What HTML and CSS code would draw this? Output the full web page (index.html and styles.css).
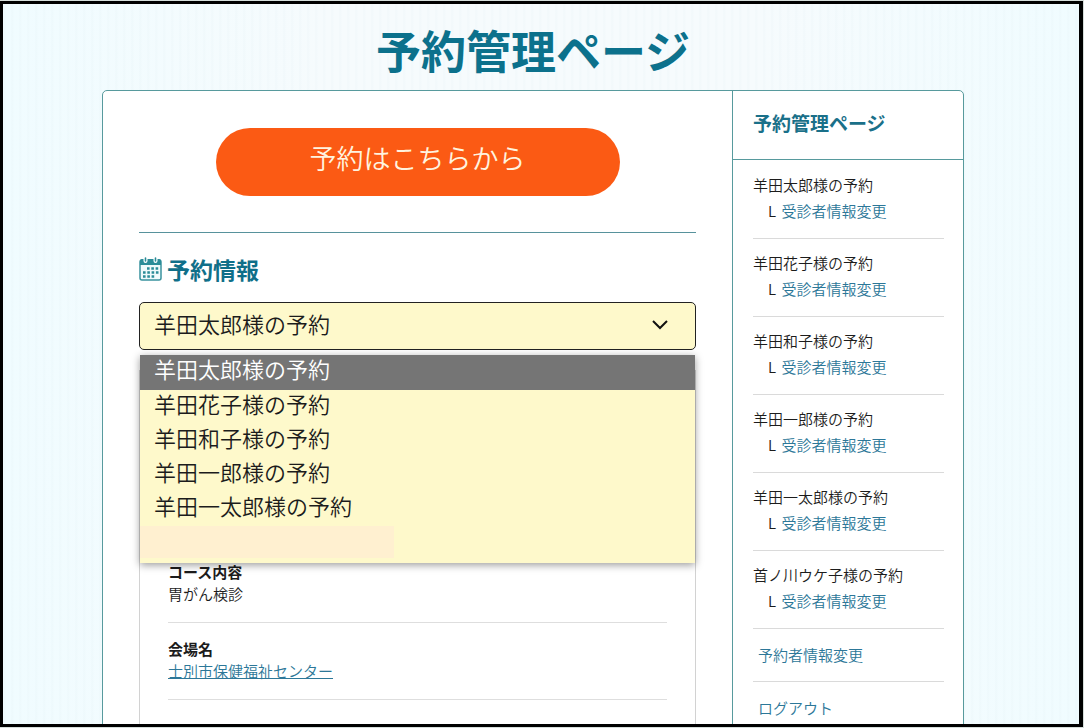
FILE: index.html
```
<!DOCTYPE html>
<html lang="ja">
<head>
    <meta charset="UTF-8">
    <meta name="viewport" content="width=device-width, initial-scale=1.0">
    <title>予約管理ページ</title>
    <link rel="stylesheet" href="styles.css">
</head>
<body>
    <div class="page">
        <h1 class="page-title">予約管理ページ</h1>
        <div class="card">
            <main class="main">
                <div class="reserve">
                    <button type="button" class="reserve-btn">予約はこちらから</button>
                </div>

                <h2 class="section-title">
                    <svg class="calendar" viewBox="0 0 24 24" aria-hidden="true">
                        <rect x="1" y="3" width="21" height="20" rx="2" fill="#f0fafb" stroke="#3a939e" stroke-width="1.5"/>
                        <path d="M1 8V4a2 2 0 0 1 2-2h17a2 2 0 0 1 2 2v4z" fill="#2b8c98"/>
                        <path d="M6.500 0v4M16.500 0v4" stroke="#fff" stroke-width="4" stroke-linecap="round"/>
                        <path d="M6.500 1v3M16.500 1v3" stroke="#2b8c98" stroke-width="1.600" stroke-linecap="round"/>
                        <path d="M8 11.500h12M4 15.500h16M4 19.500h12" stroke="#2b8c98" stroke-width="2.500" stroke-dasharray="2.600 1.700"/>
                    </svg>
                    <label for="person">予約情報</label>
                </h2>

                <div class="picker">
                    <select id="person" class="picker-select">
                        <option selected>羊田太郎様の予約</option>
                        <option>羊田花子様の予約</option>
                        <option>羊田和子様の予約</option>
                        <option>羊田一郎様の予約</option>
                        <option>羊田一太郎様の予約</option>
                    </select>
                    <svg class="chevron" viewBox="0 0 16 10" aria-hidden="true">
                        <path d="M1 1l7 7 7-7" fill="none" stroke="#111" stroke-width="2"/>
                    </svg>
                    <!-- Opened list -->
                    <ul class="menu" role="listbox" aria-labelledby="person">
                        <li class="menu-item selected" role="option" aria-selected="true">羊田太郎様の予約</li>
                        <li class="menu-item" role="option">羊田花子様の予約</li>
                        <li class="menu-item" role="option">羊田和子様の予約</li>
                        <li class="menu-item" role="option">羊田一郎様の予約</li>
                        <li class="menu-item" role="option">羊田一太郎様の予約</li>
                        <li class="menu-blank" role="presentation"></li>
                    </ul>
                </div>

                <dl class="details">
                    <div class="detail">
                        <dt>コース内容</dt>
                        <dd>胃がん検診</dd>
                    </div>
                    <div class="detail">
                        <dt>会場名</dt>
                        <dd><a href="#" class="place">士別市保健福祉センター</a></dd>
                    </div>
                    <div class="detail"></div>
                </dl>
            </main>

            <aside class="sidebar">
                <h2 class="sidebar-title">予約管理ページ</h2>
                <ul class="side-list">
                    <li>羊田太郎様の予約<div class="sub">L <a href="#">受診者情報変更</a></div></li>
                    <li>羊田花子様の予約<div class="sub">L <a href="#">受診者情報変更</a></div></li>
                    <li>羊田和子様の予約<div class="sub">L <a href="#">受診者情報変更</a></div></li>
                    <li>羊田一郎様の予約<div class="sub">L <a href="#">受診者情報変更</a></div></li>
                    <li>羊田一太郎様の予約<div class="sub">L <a href="#">受診者情報変更</a></div></li>
                    <li>首ノ川ウケ子様の予約<div class="sub">L <a href="#">受診者情報変更</a></div></li>
                    <li class="side-link"><a href="#">予約者情報変更</a></li>
                    <li class="side-link"><a href="#">ログアウト</a></li>
                </ul>
            </aside>
        </div>
    </div>
</body>
</html>
```
FILE: styles.css
```
* {
    box-sizing: border-box;
}

body {
    margin: 0;
    height: 100vh;
    padding: 1px 1px 1px 0;
    overflow: hidden;
    background-color: #d5ddda;
    color: #1c1c1c;
    font-family: "Noto Sans CJK JP", sans-serif;
    font-weight: 350;
    font-size: 15px;
    line-height: 22px;
}

h1, h2, ul, dl, dd {
    margin: 0;
    padding: 0;
}

ul {
    list-style: none;
}

a {
    color: #2c7798;
    text-decoration: none;
}

.page {
    height: 100%;
    overflow: hidden;
    padding: 0 16px 0 0;
    border: 3px solid #000;
    border-right-width: 4px;
    background:
        repeating-linear-gradient(90deg, rgba(220, 235, 240, 0.12) 0, rgba(220, 235, 240, 0.12) 2px, transparent 3px, transparent 8px),
        linear-gradient(90deg, #f0fcff, #f6fbfd 30%, #f6fbfd 70%, #f0fcff);
}

.page-title {
    padding: 16px 0 10px;
    text-align: center;
    font-size: 45px;
    line-height: 60px;
    color: #0c718c;
}

.card {
    display: grid;
    grid-template-columns: minmax(0, 1fr) 231px;
    max-width: 862px;
    margin: 0 auto;
    border: 1px solid #579a9d;
    border-radius: 5px;
    background-color: #fff;
}

.main {
    padding: 37px 36px 0;
}

.reserve {
    padding-bottom: 36px;
    border-bottom: 1px solid #57929c;
    text-align: center;
}

.reserve-btn {
    display: block;
    width: 404px;
    max-width: 100%;
    height: 68px;
    margin: 0 auto;
    padding: 0 0 10px;
    border: none;
    border-radius: 34px;
    background-color: #fb5a14;
    color: #fff3df;
    font-family: inherit;
    font-weight: 350;
    font-size: 27px;
    cursor: pointer;
}

.section-title {
    display: flex;
    align-items: center;
    gap: 4px;
    padding: 20px 0 17px;
    font-size: 23px;
    line-height: 32px;
    color: #0f6f89;
}

.calendar {
    width: 24px;
    height: 24px;
}

.picker {
    position: relative;
}

.picker-select {
    display: block;
    width: 100%;
    height: 48px;
    padding: 0 50px 6px 14px;
    border: 1px solid #222;
    border-radius: 5px;
    appearance: none;
    background-color: #fef9cb;
    color: #1c1c1c;
    font-family: inherit;
    font-weight: 350;
    font-size: 22px;
}

.chevron {
    position: absolute;
    top: 18px;
    right: 28px;
    width: 16px;
    height: 10px;
    pointer-events: none;
}

.menu {
    position: absolute;
    top: 53px;
    left: 1px;
    right: 1px;
    padding-bottom: 5px;
    background-color: #fef9cb;
    box-shadow: 0 2px 8px rgba(0, 0, 0, 0.4);
}

.menu-item {
    height: 34px;
    padding-left: 14px;
    font-size: 22px;
    line-height: 27px;
}

.menu-item.selected {
    height: 35px;
    background-color: #757575;
    color: #fff;
}

.menu-blank {
    width: 254px;
    height: 32px;
    background-color: #fff0d0;
}

.details {
    margin-top: 20px;
    padding: 175px 28px 0;
    border: 1px solid #d2d2d2;
}

.detail {
    min-height: 77px;
    padding: 15px 0 17px;
    border-bottom: 1px solid #dedede;
}

.detail dt {
    font-weight: bold;
}

.place {
    text-decoration: underline;
}

.sidebar {
    border-left: 1px solid #579a9d;
}

.sidebar-title {
    padding: 16px 20px 20px;
    border-bottom: 1px solid #579a9d;
    font-size: 19px;
    line-height: 32px;
    color: #1a7089;
}

.side-list {
    padding: 1px 19px 0 20px;
    line-height: 26px;
}

.side-list li {
    padding: 11px 0 14px;
    border-bottom: 1px solid #dadada;
}

.sub {
    padding-left: 15px;
}

.sub a {
    padding-left: 2px;
}

.side-list .side-link {
    padding: 13px 5px;
}
```
